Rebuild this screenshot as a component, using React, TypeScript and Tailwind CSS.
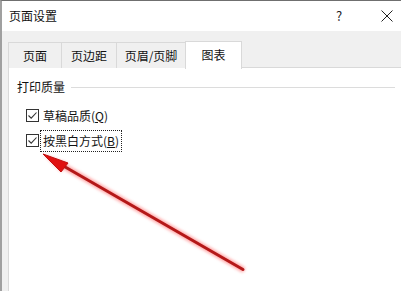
const font = { fontFamily: '"Noto Sans CJK SC", "Noto Sans", sans-serif' };

const Check = () => (
  <span className="w-[13px] h-[13px] border border-[#333] bg-white flex items-center justify-center shrink-0">
    <svg width="11" height="11" viewBox="0 0 11 11">
      <path d="M1.5 5.5 L4.2 8.2 L9.5 2.5" fill="none" stroke="#333" strokeWidth="1.1" />
    </svg>
  </span>
);

const tabs = ['页面', '页边距', '页眉/页脚'];
const tabWidths = ['w-[53px]', 'w-[55px]', 'w-[69px]'];

export default function App() {
  return (
    <div
      className="relative w-[401px] h-[291px] overflow-hidden bg-[#f0f0f0] border-t border-l-2 border-t-[#6f6f6f] border-l-[#a0a0a0] text-[12px] text-[#111]"
      style={font}
    >
      {/* title bar */}
      <div className="h-[30px] bg-white flex items-center pl-[7px]">
        <span className="flex-1">页面设置</span>
        <span className="w-[12px] text-[13px] text-[#222] mr-[33px]">?</span>
        <svg width="12" height="12" viewBox="0 0 12 12" className="mr-[8px]">
          <path d="M0.5 0.5 L11.5 11.5 M11.5 0.5 L0.5 11.5" stroke="#222" strokeWidth="1" />
        </svg>
      </div>

      {/* tabs */}
      <div className="pl-[6px] pt-[9px]">
        <div className="flex items-end h-[28px] relative z-10">
          {tabs.map((t, i) => (
            <div
              key={t}
              className={`${tabWidths[i]} h-[26px] border-t border-l border-[#d9d9d9] bg-[#f0f0f0] flex items-center justify-center`}
            >
              {t}
            </div>
          ))}
          <div className="w-[57px] h-[28px] border-t border-l border-r border-[#d9d9d9] bg-white flex items-center justify-center -mb-px pb-px">
            图表
          </div>
        </div>

        {/* panel */}
        <div className="bg-white border-t border-l border-[#d9d9d9] h-[230px] -mt-px pl-[8px] pt-[11px]">
          <div className="flex items-center gap-[6px] h-[16px]">
            <span>打印质量</span>
            <div className="flex-1 h-px bg-[#dcdcdc] mr-[6px]" />
          </div>
          <div className="flex flex-col gap-[12px] pl-[9px] pt-[14px]">
            <label className="flex items-center gap-[4px] h-[13px]">
              <Check />
              <span>草稿品质(<span className="underline">Q</span>)</span>
            </label>
            <label className="flex items-center gap-[2px] h-[13px]">
              <Check />
              <span className="outline outline-1 outline-dotted outline-[#222] px-[2px] py-[2px] leading-[16px]">
                按黑白方式(<span className="underline">B</span>)
              </span>
            </label>
          </div>
        </div>
      </div>

      {/* annotation arrow */}
      <svg className="absolute left-0 top-0" width="401" height="291" viewBox="0 0 401 291">
        <defs>
          <filter id="glow" x="-20%" y="-20%" width="140%" height="140%">
            <feGaussianBlur stdDeviation="1.6" />
          </filter>
        </defs>
        <g filter="url(#glow)" opacity="0.55">
          <line x1="240" y1="268" x2="58" y2="163" stroke="#ff6060" strokeWidth="6" strokeLinecap="round" />
          <polygon points="41,153 66,162 59,171" fill="#ff6060" />
        </g>
        <line x1="241" y1="268.5" x2="58" y2="163" stroke="#b41818" strokeWidth="3" strokeLinecap="round" />
        <polygon points="41,153 66,162 59,171" fill="#e01010" stroke="#c01010" strokeWidth="1" />
      </svg>
    </div>
  );
}
